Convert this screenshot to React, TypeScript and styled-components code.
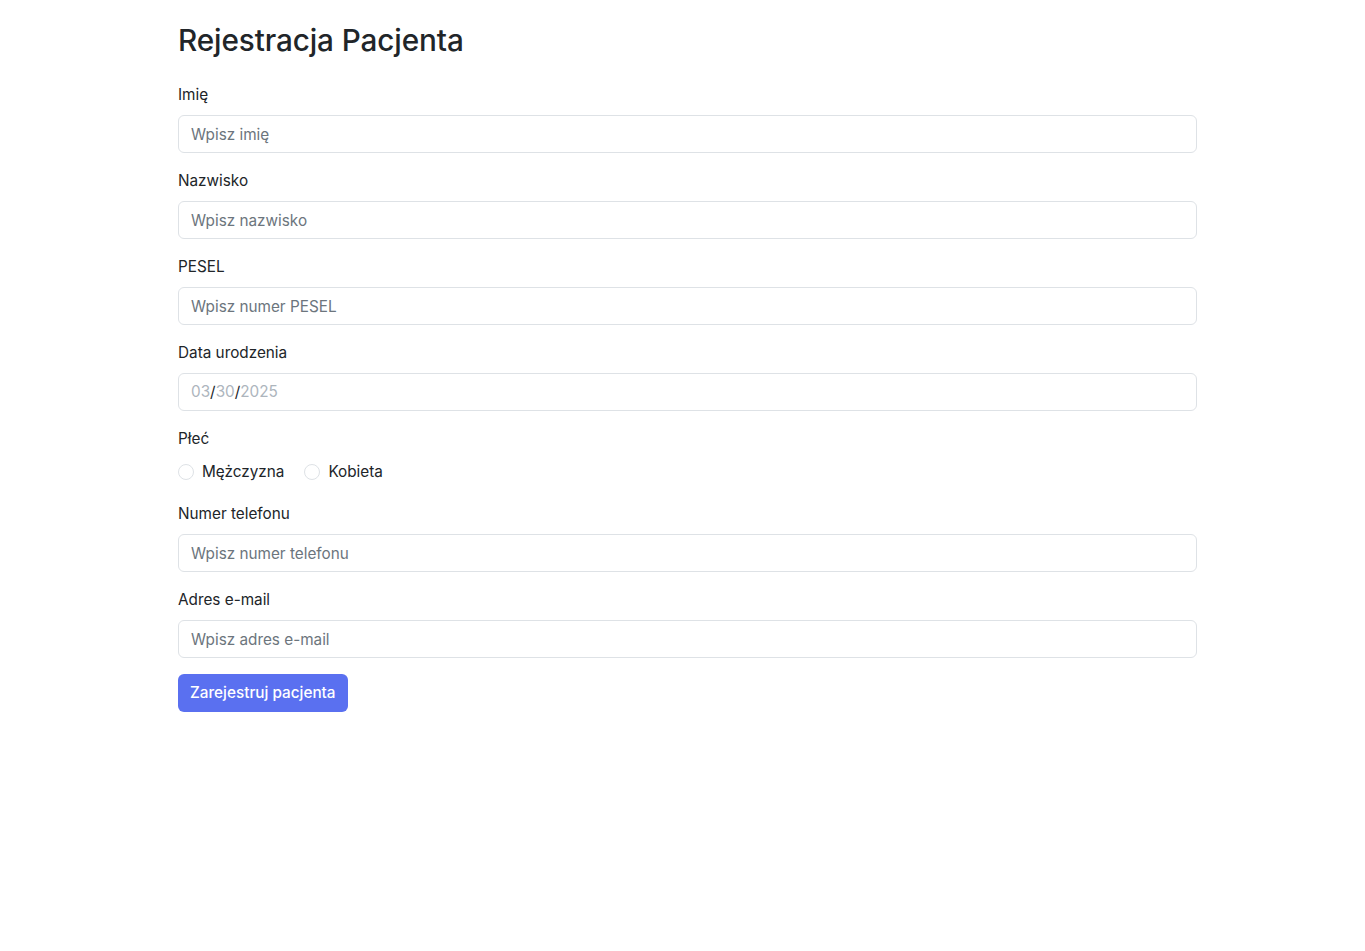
import React from "react";
import styled, { createGlobalStyle } from "styled-components";

const Global = createGlobalStyle`
  html, body { margin: 0; padding: 0; background: #fff; }
  body {
    font-family: Inter, "Helvetica Neue", Arial, sans-serif;
    font-size: 15.3px;
    line-height: 24px;
    color: #212529;
  }
  * { box-sizing: border-box; }
`;

const Page = styled.div`
  padding: 21px 168px 40px 178px;
`;

const Title = styled.h1`
  margin: 0 0 24px;
  font-size: 29.7px;
  font-weight: 500;
  line-height: 38px;
  letter-spacing: -0.1px;
`;

const Group = styled.div`
  margin-bottom: 16px;
`;

const Label = styled.label`
  display: block;
  margin-bottom: 8px;
  line-height: 24px;
`;

const Input = styled.input`
  display: block;
  width: 100%;
  height: 38px;
  padding: 6px 12px;
  font: inherit;
  line-height: 24px;
  color: #212529;
  border: 1px solid #dee2e6;
  border-radius: 6px;
  background: #fff;
  outline: none;
  &::placeholder { color: #6c757d; opacity: 1; }
`;

const DateBox = styled.div`
  display: flex;
  align-items: center;
  height: 38px;
  padding: 6px 12px;
  line-height: 24px;
  border: 1px solid #dee2e6;
  border-radius: 6px;
`;

const Seg = styled.span<{ $dim?: boolean }>`
  color: ${(p) => (p.$dim ? "#adb5bd" : "#212529")};
`;

const RadioRow = styled.div`
  display: flex;
  padding: 1px 0 2px;
  min-height: 24px;
`;

const Check = styled.label`
  display: flex;
  align-items: center;
  margin-right: 20px;
  line-height: 24px;
`;

const Circle = styled.span`
  width: 16px;
  height: 16px;
  border: 1px solid #dee2e6;
  border-radius: 50%;
  margin-right: 8px;
  background: #fff;
`;

const Button = styled.button`
  height: 38px;
  padding: 6px 12px;
  font: inherit;
  font-weight: 500;
  line-height: 24px;
  color: #fff;
  background: #5a70f0;
  border: 0;
  border-radius: 6px;
`;

const fields: { label: string; ph: string }[] = [
  { label: "Imię", ph: "Wpisz imię" },
  { label: "Nazwisko", ph: "Wpisz nazwisko" },
  { label: "PESEL", ph: "Wpisz numer PESEL" },
];

export default function App() {
  return (
    <>
      <Global />
      <Page>
        <Title>Rejestracja Pacjenta</Title>
        {fields.map((f) => (
          <Group key={f.label}>
            <Label>{f.label}</Label>
            <Input placeholder={f.ph} />
          </Group>
        ))}
        <Group>
          <Label>Data urodzenia</Label>
          <DateBox>
            <Seg $dim>03</Seg>
            <Seg>/</Seg>
            <Seg $dim>30</Seg>
            <Seg>/</Seg>
            <Seg $dim>2025</Seg>
          </DateBox>
        </Group>
        <Group>
          <Label>Płeć</Label>
          <RadioRow>
            <Check>
              <Circle />
              Mężczyzna
            </Check>
            <Check>
              <Circle />
              Kobieta
            </Check>
          </RadioRow>
        </Group>
        <Group>
          <Label>Numer telefonu</Label>
          <Input placeholder="Wpisz numer telefonu" />
        </Group>
        <Group>
          <Label>Adres e-mail</Label>
          <Input placeholder="Wpisz adres e-mail" />
        </Group>
        <Button>Zarejestruj pacjenta</Button>
      </Page>
    </>
  );
}
